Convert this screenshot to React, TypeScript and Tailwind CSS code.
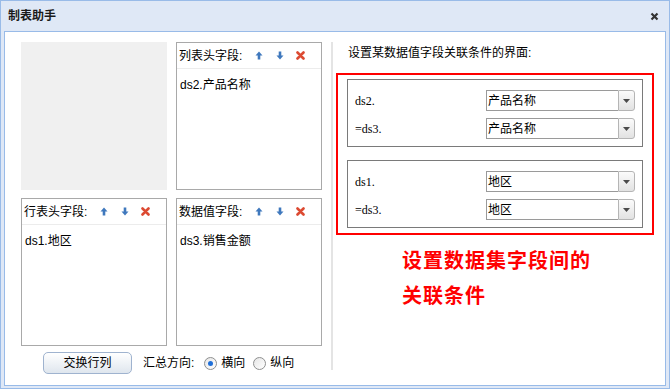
import React from "react";

// Dialog: 制表助手 (crosstab helper) with field panels and association conditions

const SANS = "font-['Liberation_Sans','Noto_Sans_CJK_SC',sans-serif]";
const SERIF = "font-['Liberation_Serif','Noto_Sans_CJK_SC',serif]";

function UpIcon() {
  return (
    <svg width="8" height="9" viewBox="0 0 8 9">
      <path d="M4 0.5 L7.5 4.5 L5.3 4.5 L5.3 8.5 L2.7 8.5 L2.7 4.5 L0.5 4.5 Z" fill="#3f78bd" />
    </svg>
  );
}

function DownIcon() {
  return (
    <svg width="8" height="9" viewBox="0 0 8 9">
      <path d="M4 8.5 L7.5 4.5 L5.3 4.5 L5.3 0.5 L2.7 0.5 L2.7 4.5 L0.5 4.5 Z" fill="#3f78bd" />
    </svg>
  );
}

function DeleteIcon() {
  return (
    <svg width="9" height="9" viewBox="0 0 9 9">
      <path d="M1.5 1.5 L7.5 7.5 M7.5 1.5 L1.5 7.5" stroke="#dc4a32" strokeWidth="2.6" strokeLinecap="round" />
    </svg>
  );
}

function FieldPanel({ title, item }: { title: string; item: string }) {
  return (
    <div className="flex h-[148px] w-[146px] flex-col border border-[#a9a9a9] bg-white">
      <div className="flex h-[26px] items-center border-b border-[#ececec] pl-[2px] text-[12px] text-black">
        <span className="w-[69px]">{title}</span>
        <span className="flex w-[21px] justify-center"><UpIcon /></span>
        <span className="flex w-[21px] justify-center"><DownIcon /></span>
        <span className="flex w-[21px] justify-center"><DeleteIcon /></span>
      </div>
      <div className="px-[3px] pt-[8px] text-[12px] leading-[16px] text-black">{item}</div>
    </div>
  );
}

function Radio({ checked, label }: { checked?: boolean; label: string }) {
  return (
    <span className="flex items-center gap-[4px]">
      <span className="flex h-[13px] w-[13px] items-center justify-center rounded-full border border-[#8e8f8f] bg-gradient-to-br from-[#e6e6e6] to-white">
        {checked && <span className="h-[5px] w-[5px] rounded-full bg-[#1f6fd8]" />}
      </span>
      <span>{label}</span>
    </span>
  );
}

function Select({ value }: { value: string }) {
  return (
    <div className="flex h-[21px] w-[149px]">
      <div className="flex flex-1 items-center border border-r-0 border-[#9a9a9a] bg-white pl-[1px] text-[12px] text-black">
        {value}
      </div>
      <div className="flex w-[17px] items-center justify-center rounded-r-[3px] border border-[#b5b5b5] bg-gradient-to-b from-[#fbfbfb] to-[#e2e2e2]">
        <svg width="7" height="4" viewBox="0 0 7 4">
          <path d="M0 0 L7 0 L3.5 4 Z" fill="#4a4a4a" />
        </svg>
      </div>
    </div>
  );
}

function ConditionBox({ rows }: { rows: { label: string; value: string }[] }) {
  return (
    <div className="flex w-[296px] flex-col gap-[7px] border border-[#7a7a7a] pt-[10px] pb-[7px]">
      {rows.map((r) => (
        <div key={r.label} className="flex h-[21px] items-center">
          <span className={`w-[138px] pl-[7px] text-[12px] text-black ${SERIF}`}>{r.label}</span>
          <Select value={r.value} />
        </div>
      ))}
    </div>
  );
}

export default function App() {
  return (
    <div className={`flex h-[389px] w-[670px] flex-col border border-[#99bbe8] bg-[#dfe8f6] ${SANS}`}>
      {/* Title bar */}
      <div className="flex h-[30px] shrink-0 items-center justify-between pl-[7px] pr-[10px]">
        <span className="text-[12px] font-bold text-[#1a1a1a]">制表助手</span>
        <svg width="9" height="9" viewBox="0 0 9 9">
          <path d="M1.5 1.5 L7.5 7.5 M7.5 1.5 L1.5 7.5" stroke="#333" strokeWidth="2.2" />
        </svg>
      </div>

      {/* Body */}
      <div className="mx-[3px] flex h-[355px] border border-[#99bbe8] bg-white">
        {/* Left: field panels */}
        <div className="flex flex-col pl-[16px] pt-[10px]">
          <div className="grid grid-cols-[146px_146px] gap-x-[9px] gap-y-[8px]">
            <div className="h-[148px] w-[146px] bg-[#f0f0f0]" />
            <FieldPanel title="列表头字段:" item="ds2.产品名称" />
            <FieldPanel title="行表头字段:" item="ds1.地区" />
            <FieldPanel title="数据值字段:" item="ds3.销售金额" />
          </div>
          <div className="mt-[6px] flex items-center text-[12px] text-black">
            <button className="ml-[22px] h-[22px] w-[89px] rounded-[5px] border border-[#9fb3cf] bg-gradient-to-b from-white to-[#dfe6ee] text-[12px] text-black">
              交换行列
            </button>
            <span className="ml-[11px]">汇总方向:</span>
            <span className="ml-[10px]"><Radio checked label="横向" /></span>
            <span className="ml-[8px]"><Radio label="纵向" /></span>
          </div>
        </div>

        {/* Divider */}
        <div className="ml-[9px] mt-[10px] h-[328px] w-[2px] bg-[#e4e4e4]" />

        {/* Right: association conditions */}
        <div className="ml-[3px] flex flex-col">
          <div className="pl-[12px] pt-[13px] text-[12px] leading-[16px] text-black">设置某数据值字段关联条件的界面:</div>
          <div className="mt-[12px] flex h-[162px] w-[318px] flex-col gap-[13px] border-2 border-[#ff0000] pl-[9px] pt-[4px]">
            <ConditionBox
              rows={[
                { label: "ds2.", value: "产品名称" },
                { label: "=ds3.", value: "产品名称" },
              ]}
            />
            <ConditionBox
              rows={[
                { label: "ds1.", value: "地区" },
                { label: "=ds3.", value: "地区" },
              ]}
            />
          </div>
          <div className="ml-[66px] mt-[9px] text-[20px] font-bold leading-[35px] tracking-[1px] text-[#ff0000]">
            <div>设置数据集字段间的</div>
            <div>关联条件</div>
          </div>
        </div>
      </div>
    </div>
  );
}
